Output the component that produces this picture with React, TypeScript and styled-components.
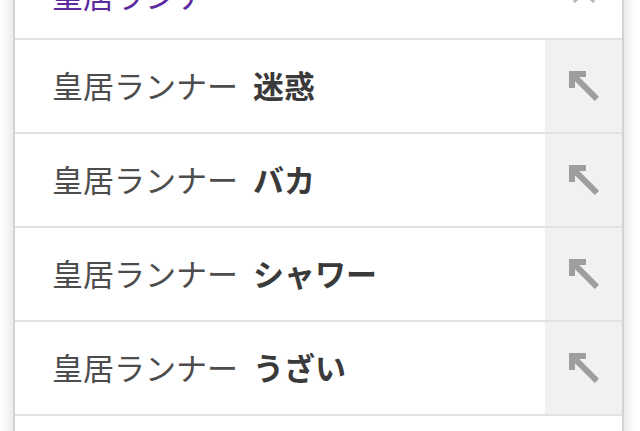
import React from "react";
import styled, { createGlobalStyle } from "styled-components";

const Global = createGlobalStyle`
  html, body { margin: 0; padding: 0; background: #ffffff; overflow: hidden; }
  body { font-family: "Noto Sans CJK JP", "Noto Sans", sans-serif; }
`;

const Page = styled.div`
  width: 640px;
  height: 431px;
  overflow: hidden;
`;

const Card = styled.div`
  margin: -54px 0 0 13px;
  width: 607px;
  background: #ffffff;
  border-left: 2px solid #d3d3d3;
  border-right: 2px solid #d3d3d3;
  box-shadow: 0 0 14px rgba(0, 0, 0, 0.16);
  display: flex;
  flex-direction: column;
`;

const Row = styled.div`
  display: flex;
  height: 92px;
  border-bottom: 2px solid #e2e2e2;
`;

const Label = styled.div<{ $visited?: boolean }>`
  flex: 1;
  display: flex;
  align-items: center;
  padding-left: 37px;
  padding-top: ${(p) => (p.$visited ? "5px" : "0")};
  padding-bottom: ${(p) => (p.$visited ? "0" : "4px")};
  font-size: 31px;
  color: ${(p) => (p.$visited ? "#5b2a9e" : "#4d4d4d")};
  white-space: nowrap;
`;

const Strong = styled.b`
  margin-left: 15px;
  font-weight: 700;
  color: #3a3a3a;
`;

const Side = styled.div<{ $shaded?: boolean }>`
  width: 77px;
  display: flex;
  align-items: center;
  justify-content: center;
  background: ${(p) => (p.$shaded ? "#f1f1f1" : "transparent")};
`;

const FillRow = styled.div`
  height: 60px;
`;

const ArrowIcon = () => (
  <svg width="30" height="30" viewBox="0 0 30 30">
    <path d="M0 0 H17 V6 H10.2 L30 25.8 L25.8 30 L6 10.2 V17 H0 Z" fill="#9e9e9e" />
  </svg>
);

const CloseIcon = () => (
  <svg width="24" height="24" viewBox="0 0 24 24">
    <path d="M2 2 L22 22 M22 2 L2 22" stroke="#b5b5b5" strokeWidth="3" fill="none" />
  </svg>
);

const items = ["迷惑", "バカ", "シャワー", "うざい"];

export default function App() {
  return (
    <Page>
      <Global />
      <Card>
        <Row>
          <Label $visited>皇居ランナー</Label>
          <Side>
            <CloseIcon />
          </Side>
        </Row>
        {items.map((s) => (
          <Row key={s}>
            <Label>
              皇居ランナー
              <Strong>{s}</Strong>
            </Label>
            <Side $shaded>
              <ArrowIcon />
            </Side>
          </Row>
        ))}
        <FillRow />
      </Card>
    </Page>
  );
}
